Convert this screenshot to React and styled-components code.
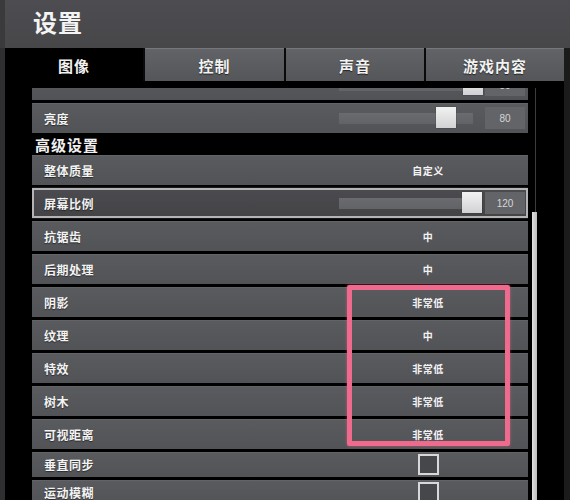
import styled, { createGlobalStyle } from 'styled-components';

const GlobalStyle = createGlobalStyle`
  html, body {
    margin: 0;
    padding: 0;
    background: #000;
  }
  body {
    font-family: 'Noto Sans CJK SC', 'Noto Sans', sans-serif;
  }
`;

const Screen = styled.div`
  width: 570px;
  height: 500px;
  overflow: hidden;
  background: #000;
  display: flex;
  flex-direction: column;
`;

// шапка
const Header = styled.div`
  height: 48px;
  flex-shrink: 0;
  background: linear-gradient(#4d4d51, #47474a);
  border-left: 5px solid #3a3a3c;
  box-sizing: border-box;
  display: flex;
  align-items: center;
  padding-left: 28px;
  padding-bottom: 6px;
`;

const Title = styled.h1`
  margin: 0;
  font-size: 24px;
  font-weight: 700;
  color: #f4f4f4;
  letter-spacing: 1px;
`;

const Main = styled.div`
  flex: 1;
  display: flex;
  flex-direction: column;
  border-left: 5px solid #2f2f31;
  border-right: 6px solid #1b1b1c;
  min-height: 0;
`;

const TabBar = styled.div`
  height: 33px;
  flex-shrink: 0;
  display: flex;
  gap: 2px;
  background: #0a0a0a;
`;

const Tab = styled.div`
  width: ${p => p.$w}px;
  display: flex;
  align-items: center;
  justify-content: center;
  font-size: 15px;
  font-weight: 700;
  letter-spacing: 1px;
  color: #f2f2f2;
  box-sizing: border-box;
  background: ${p => (p.$active ? '#000' : 'linear-gradient(#626366, #55565a)')};
  border-top: 1px solid ${p => (p.$active ? '#000' : '#77787b')};
  text-shadow: 0 1px 1px rgba(0, 0, 0, 0.6);
`;

const Body = styled.div`
  flex: 1;
  display: flex;
  min-height: 0;
  padding: 7px 0 0 27px;
`;

const Viewport = styled.div`
  width: 496px;
  overflow: hidden;
`;

const List = styled.div`
  display: flex;
  flex-direction: column;
  gap: 3px;
  margin-top: -18px;
`;

const Group = styled.div`
  position: relative;
  display: flex;
  flex-direction: column;
  gap: 3px;
`;

const Row = styled.div`
  height: ${p => p.$h || 30}px;
  flex-shrink: 0;
  display: grid;
  grid-template-columns: 1fr 196px;
  align-items: center;
  padding: ${p => (p.$selected ? '0 0 0 10px' : '0 2px 0 12px')};
  box-sizing: border-box;
  background: ${p => (p.$selected ? 'linear-gradient(#4b4b4f, #444447)' : 'linear-gradient(#5a5b5f, #525357)')};
  border: ${p => (p.$selected ? '2px solid #b4b4b6' : 'none')};
  box-shadow: ${p => (p.$selected ? '0 0 2px rgba(255,255,255,0.3)' : 'inset 0 1px 0 rgba(255,255,255,0.06)')};
`;

const Label = styled.span`
  font-size: 12px;
  font-weight: 700;
  color: #f3f3f3;
  letter-spacing: 0.5px;
  text-shadow: 0 1px 1px rgba(0, 0, 0, 0.5);
  align-self: ${p => (p.$top ? 'start' : 'center')};
`;

const Value = styled.span`
  justify-self: center;
  font-size: 10px;
  font-weight: 700;
  color: #f3f3f3;
  letter-spacing: 0.5px;
`;

const SectionTitle = styled.div`
  height: 16px;
  display: flex;
  align-items: center;
  padding-left: 3px;
  font-size: 15px;
  font-weight: 700;
  color: #f0f0f0;
  letter-spacing: 1px;
`;

const SliderCell = styled.div`
  display: flex;
  align-items: center;
  padding-left: 9px;
`;

const SliderBox = styled.div`
  position: relative;
  width: 144px;
  height: 22px;
  display: flex;
  align-items: center;
`;

const Track = styled.div`
  width: ${p => p.$w}px;
  height: 11px;
  background: linear-gradient(#6a6b6f, #626367);
`;

const Thumb = styled.div`
  position: absolute;
  top: 0;
  left: ${p => p.$left}px;
  width: 20px;
  height: 21px;
  background: linear-gradient(#f2f2f2, #d2d2d4);
  box-shadow: 0 0 1px rgba(0, 0, 0, 0.5);
`;

const NumberBox = styled.div`
  width: 40px;
  height: 22px;
  margin-left: 2px;
  display: flex;
  align-items: center;
  justify-content: center;
  background: #636468;
  font-family: 'Liberation Sans', sans-serif;
  font-size: 10px;
  color: #d6d6d6;
`;

const Check = styled.div`
  justify-self: center;
  width: 21px;
  height: 21px;
  box-sizing: border-box;
  border: 2px solid #d8d8d8;
  background: #46474b;
`;

// розовая рамка поверх строк
const Highlight = styled.div`
  position: absolute;
  top: -2px;
  bottom: 3px;
  left: 315px;
  width: 163px;
  box-sizing: border-box;
  border: 5px solid #ef6a8c;
  border-radius: 2px;
  box-shadow: 0 0 3px rgba(239, 106, 140, 0.6);
  pointer-events: none;
`;

const ScrollCol = styled.div`
  width: 5px;
  margin-left: 4px;
  display: flex;
  flex-direction: column;
`;

const ScrollTrack = styled.div`
  height: 124px;
  width: 1px;
  margin-left: 3px;
  background: #3c3c3e;
`;

const ScrollThumb = styled.div`
  flex: 1;
  background: linear-gradient(90deg, #e2e2e2, #bdbdbf);
`;

function SliderRow({ label, value, trackW, thumb, selected, top }) {
  return (
    <Row $selected={selected}>
      <Label $top={top}>{label}</Label>
      <SliderCell>
        <SliderBox>
          <Track $w={trackW} />
          <Thumb $left={thumb} />
        </SliderBox>
        <NumberBox>{value}</NumberBox>
      </SliderCell>
    </Row>
  );
}

function OptionRow({ label, value }) {
  return (
    <Row>
      <Label>{label}</Label>
      <Value>{value}</Value>
    </Row>
  );
}

function CheckRow({ label }) {
  return (
    <Row $h={25}>
      <Label>{label}</Label>
      <Check />
    </Row>
  );
}

const tabs = [
  { name: '图像', w: 138, active: true },
  { name: '控制', w: 139 },
  { name: '声音', w: 138 },
  { name: '游戏内容', w: 138 },
];

const marked = [
  ['阴影', '非常低'],
  ['纹理', '中'],
  ['特效', '非常低'],
  ['树木', '非常低'],
  ['可视距离', '非常低'],
];

export default function App() {
  return (
    <>
      <GlobalStyle />
      <Screen>
        <Header>
          <Title>设置</Title>
        </Header>
        <Main>
          <TabBar>
            {tabs.map(t => (
              <Tab key={t.name} $w={t.w} $active={t.active}>{t.name}</Tab>
            ))}
          </TabBar>
          <Body>
            <Viewport>
              <List>
                <SliderRow label="伽马值" value="50" trackW={144} thumb={124} top />
                <SliderRow label="亮度" value="80" trackW={134} thumb={97} />
                <SectionTitle>高级设置</SectionTitle>
                <OptionRow label="整体质量" value="自定义" />
                <SliderRow label="屏幕比例" value="120" trackW={143} thumb={123} selected />
                <OptionRow label="抗锯齿" value="中" />
                <OptionRow label="后期处理" value="中" />
                <Group>
                  {marked.map(([l, v]) => (
                    <OptionRow key={l} label={l} value={v} />
                  ))}
                  <Highlight />
                </Group>
                <CheckRow label="垂直同步" />
                <CheckRow label="运动模糊" />
              </List>
            </Viewport>
            <ScrollCol>
              <ScrollTrack />
              <ScrollThumb />
            </ScrollCol>
          </Body>
        </Main>
      </Screen>
    </>
  );
}
